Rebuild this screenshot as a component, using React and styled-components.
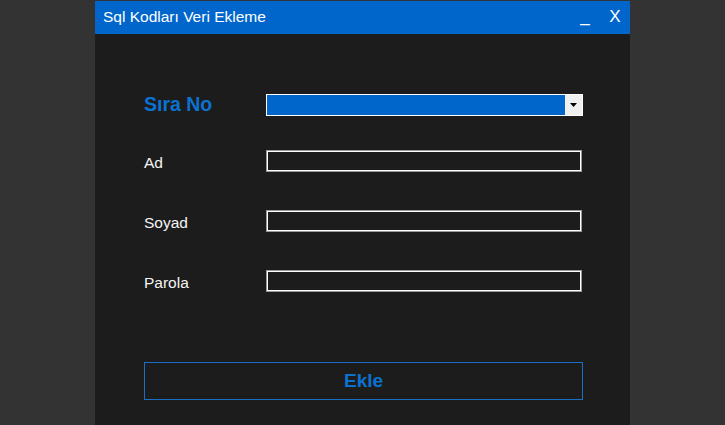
import React from "react";
import styled, { createGlobalStyle } from "styled-components";

const Global = createGlobalStyle`
  html, body { margin: 0; padding: 0; background: #333333; }
  body { font-family: "Liberation Sans", Arial, sans-serif; }
  #root { width: 725px; height: 425px; overflow: hidden; }
`;

const Page = styled.div`
  width: 725px;
  height: 425px;
  background: #333333;
  display: flex;
  justify-content: flex-start;
  padding-left: 95px;
  padding-top: 1px;
  box-sizing: border-box;
`;

const Window = styled.div`
  width: 535px;
  height: 424px;
  background: #1c1c1c;
  display: flex;
  flex-direction: column;
`;

const TitleBar = styled.div`
  height: 33px;
  background: #0066cc;
  display: flex;
  align-items: center;
  padding-left: 8px;
  color: #ffffff;
  font-size: 15.5px;
  flex-shrink: 0;
`;

const Title = styled.div`
  flex: 1;
  margin-top: -1px;
`;

const TitleButton = styled.div`
  width: ${(p) => p.$w}px;
  text-align: center;
  font-size: 17px;
  color: #ffffff;
  margin-top: ${(p) => p.$mt || 0}px;
`;

const Body = styled.div`
  flex: 1;
  display: flex;
  flex-direction: column;
  padding-left: 49px;
  padding-top: 60px;
`;

const Row = styled.div`
  display: flex;
  align-items: center;
  height: 22px;
  margin-top: ${(p) => p.$mt || 0}px;
`;

const Label = styled.div`
  width: 122px;
  font-size: ${(p) => (p.$accent ? "19.5px" : "15.5px")};
  font-weight: ${(p) => (p.$accent ? 700 : 400)};
  color: ${(p) => (p.$accent ? "#0b72d2" : "#f4f4f4")};
  margin-top: ${(p) => (p.$accent ? -2 : 3)}px;
`;

const Select = styled.div`
  width: 317px;
  height: 22px;
  box-sizing: border-box;
  border: 1px solid #ffffff;
  background: #0066cc;
  display: flex;
  justify-content: flex-end;
`;

const DropButton = styled.div`
  width: 17px;
  height: 100%;
  background: #f0f0f0;
  display: flex;
  align-items: center;
  justify-content: center;
`;

const Input = styled.div`
  width: 316px;
  height: 22px;
  box-sizing: border-box;
  border: 1px solid #9a9a9a;
  box-shadow: inset 0 0 0 1px #ffffff;
  background: #1c1c1c;
`;

const Button = styled.div`
  width: 439px;
  height: 38px;
  box-sizing: border-box;
  border: 1px solid #1a6ec6;
  margin-top: 70px;
  display: flex;
  align-items: center;
  justify-content: center;
  color: #0b72d2;
  font-size: 19px;
  font-weight: 700;
`;

export default function App() {
  return (
    <>
      <Global />
      <Page>
        <Window>
          <TitleBar>
            <Title>Sql Kodları Veri Ekleme</Title>
            <TitleButton $w={30} $mt={-2}>_</TitleButton>
            <TitleButton $w={30} $mt={-1}>X</TitleButton>
          </TitleBar>
          <Body>
            <Row>
              <Label $accent>Sıra No</Label>
              <Select>
                <DropButton>
                  <svg width="7" height="4" viewBox="0 0 7 4">
                    <polygon points="0,0 7,0 3.5,4" fill="#000" />
                  </svg>
                </DropButton>
              </Select>
            </Row>
            <Row $mt={34}>
              <Label>Ad</Label>
              <Input />
            </Row>
            <Row $mt={38}>
              <Label>Soyad</Label>
              <Input />
            </Row>
            <Row $mt={38}>
              <Label>Parola</Label>
              <Input />
            </Row>
            <Button>Ekle</Button>
          </Body>
        </Window>
      </Page>
    </>
  );
}
